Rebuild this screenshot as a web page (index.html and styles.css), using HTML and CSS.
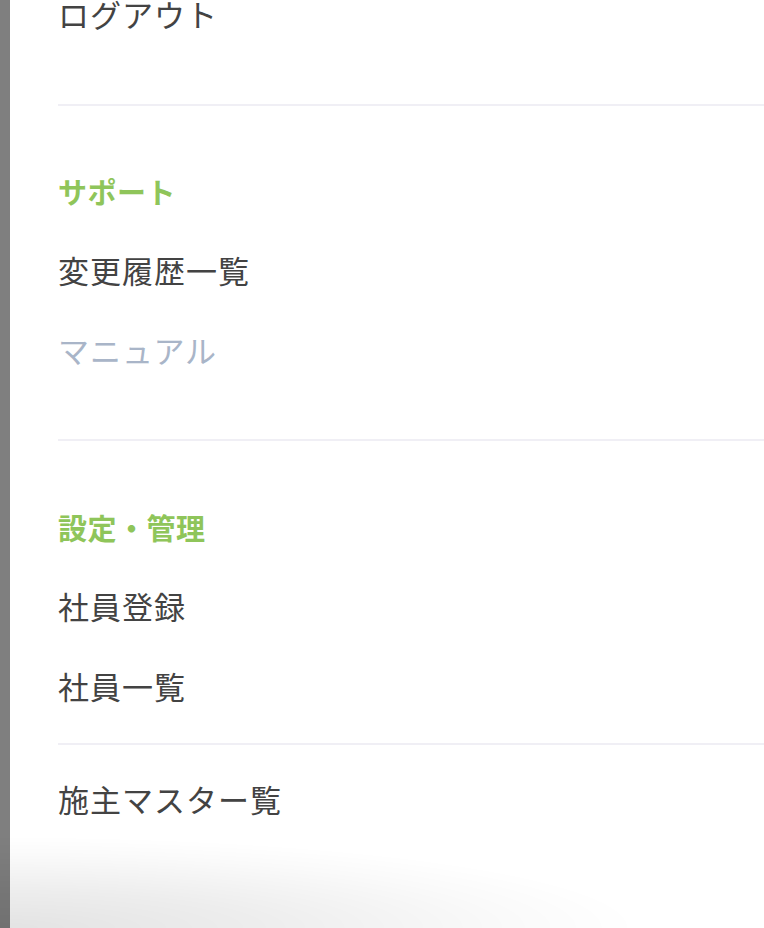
FILE: index.html
```html
<!DOCTYPE html>
<html lang="ja">
<head>
<meta charset="utf-8">
<link rel="stylesheet" href="styles.css">
</head>
<body>
<div class="page">
  <div class="rail"></div>
  <nav class="panel">
    <section class="group group-first">
      <a class="item">ログアウト</a>
    </section>
    <section class="group group-support">
      <div class="heading">サポート</div>
      <a class="item">変更履歴一覧</a>
      <a class="item item-muted">マニュアル</a>
    </section>
    <section class="group group-settings">
      <div class="heading">設定・管理</div>
      <a class="item">社員登録</a>
      <a class="item">社員一覧</a>
    </section>
    <section class="group group-last">
      <a class="item">施主マスター覧</a>
    </section>
  </nav>
</div>
<div class="bottom-shade"></div>
</body>
</html>
```
FILE: styles.css
```css
html, body {
  margin: 0;
  padding: 0;
  background: #ffffff;
  height: 100%;
  overflow: hidden;
}
body {
  font-family: "Noto Sans CJK JP", "Noto Sans", sans-serif;
  color: #434343;
}
.page {
  display: flex;
  min-height: 928px;
}
.rail {
  width: 10px;
  flex: none;
  background: #7f7f7f;
}
.panel {
  flex: 1;
  padding-left: 48px;
  display: flex;
  flex-direction: column;
}
.group {
  display: flex;
  flex-direction: column;
  border-bottom: 2px solid #f0eff5;
}
.group-first {
  margin-top: -25px;
  padding-bottom: 49px;
}
.group-support {
  padding-top: 47px;
  padding-bottom: 48px;
}
.group-settings {
  padding-top: 48px;
  padding-bottom: 16px;
}
.group-last {
  padding-top: 15px;
  border-bottom: none;
}
.heading {
  height: 78px;
  box-sizing: border-box;
  padding-bottom: 2px;
  display: flex;
  align-items: center;
  font-size: 29px;
  font-weight: 700;
  color: #8fc55a;
  letter-spacing: 0.5px;
}
.item {
  height: 80px;
  box-sizing: border-box;
  padding-bottom: 4px;
  display: flex;
  align-items: center;
  font-size: 31px;
  letter-spacing: 1px;
  color: #434343;
  text-decoration: none;
}
.item-muted {
  color: #a9b5c8;
}
.bottom-shade {
  position: fixed;
  left: 0;
  right: 0;
  bottom: 0;
  height: 92px;
  pointer-events: none;
  background: radial-gradient(ellipse 640px 92px at 0 100%, rgba(0,0,0,0.11) 0%, rgba(0,0,0,0.07) 40%, rgba(0,0,0,0.02) 80%, rgba(0,0,0,0) 100%);
}
```
